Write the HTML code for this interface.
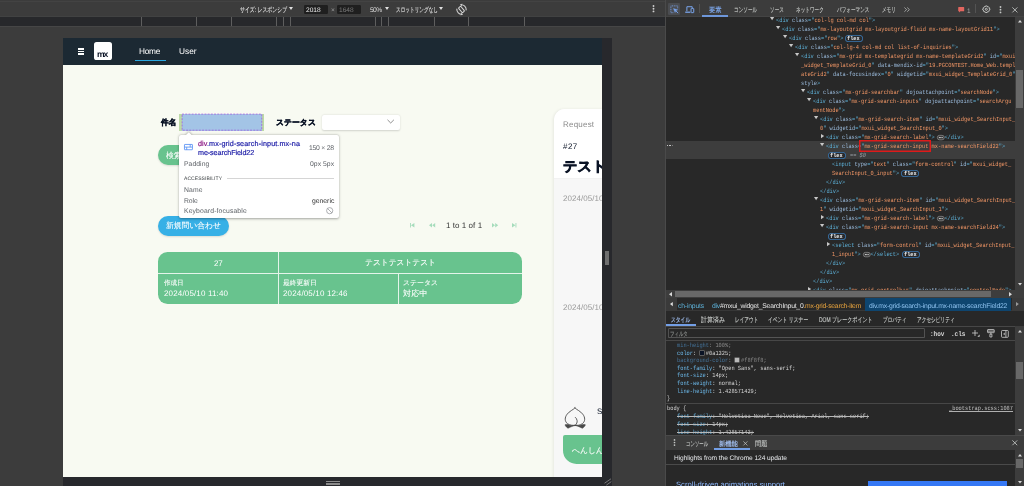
<!DOCTYPE html><html lang="ja"><head><meta charset="utf-8"><title>DevTools</title><style>
*{box-sizing:border-box;margin:0;padding:0}
html,body{width:1024px;height:486px;overflow:hidden;background:#3c3c3c;font-family:"Liberation Sans",sans-serif;text-rendering:geometricPrecision;}
svg{overflow:visible}
svg text{text-rendering:geometricPrecision;white-space:pre;}
.a{position:absolute;white-space:pre;}
#ltool,#page,#tip,#dt{will-change:transform;}
#ltool{left:0;top:0;width:665px;height:16.5px;background:#3c3c3c;}
#media{left:0;top:16.4px;width:665.4px;height:9.7px;background:#27282b;box-shadow:inset 0 0.7px 0 #4b4b4b;}
#media i{position:absolute;top:0.4px;height:9.3px;width:0.9px;background:#5e5e5e;}
#rres{left:601.5px;top:37.6px;width:10.5px;height:448.4px;background:#27282c;}
#bres{left:63.3px;top:476.5px;width:548.7px;height:9.5px;background:#27282c;}
#vsep{left:665px;top:0;width:1px;height:486px;background:#4a4a4a;}
#page{left:63px;top:38px;width:539px;height:439px;background:#f8faf2;overflow:hidden;}
#nav{left:0;top:0;width:539px;height:26.9px;background:#1c2933;}
.btn{border-radius:12px;}
#card{left:95.2px;top:213.8px;width:364.3px;height:51.8px;background:#68c38e;border-radius:9.5px;}
#rp{left:490.6px;top:71.3px;width:100px;height:400px;background:#f7f7f7;border-top-left-radius:11px;box-shadow:-1px 0 3px rgba(0,0,0,.07);}
#tip{left:179px;top:135px;width:160px;height:82.6px;background:#fff;border-radius:2px;box-shadow:0 0.5px 2.6px rgba(0,0,0,.34),0 0 1px rgba(0,0,0,.12);}
#dt{left:666px;top:0;width:358px;height:486px;background:#282828;overflow:hidden;}
#dtbar{left:0;top:0;width:358px;height:16.5px;background:#3c3c3c;box-shadow:inset 0 -0.6px 0 #4c4c4c;}
.pill{position:absolute;height:7.2px;box-shadow:inset 0 0 0 0.8px #3a78b2;border-radius:3.6px;background:#2a2b2d;}
.dots{position:absolute;height:4.4px;width:6.4px;border-radius:2px;background:#6b6b6b;}
.sb{background:#3d3d3d;}
.th{background:#686868;}
</style></head><body>
<div class="a" id="ltool">
<svg class="a" style="left:239.80px;top:0.00px" width="47.1" height="16"><text x="0" y="12" font-family="Liberation Sans, sans-serif" font-size="6.9" fill="#dcdcdc" stroke="#dcdcdc" stroke-width="0.14" textLength="47.10" lengthAdjust="spacingAndGlyphs">サイズ: レスポンシブ</text></svg>
<svg class="a" style="left:288.50px;top:7.20px" width="4" height="3" viewBox="0 0 4 3" ><path d="M0 0h4L2 3z" fill="#e0e0e0"/></svg>
<div class="a" style="left:304.00px;top:4.90px;width:23.7px;height:9px;background:#1f1f1f;border-radius:1.2px"></div>
<svg class="a" style="left:305.60px;top:0.00px" width="14.6" height="16"><text x="0" y="12" font-family="Liberation Sans, sans-serif" font-size="6.6" fill="#f0f0f0" textLength="14.60" lengthAdjust="spacing">2018</text></svg>
<svg class="a" style="left:330.60px;top:0.00px" width="3.8" height="16"><text x="0" y="12" font-family="Liberation Sans, sans-serif" font-size="6.6" fill="#9a9a9a" textLength="3.80" lengthAdjust="spacing">×</text></svg>
<div class="a" style="left:336.90px;top:4.90px;width:23.7px;height:9px;background:#1f1f1f;border-radius:1.2px"></div>
<svg class="a" style="left:338.50px;top:0.00px" width="14.6" height="16"><text x="0" y="12" font-family="Liberation Sans, sans-serif" font-size="6.6" fill="#7b7b7b" textLength="14.60" lengthAdjust="spacing">1648</text></svg>
<svg class="a" style="left:370.40px;top:0.00px" width="12.2" height="16"><text x="0" y="12" font-family="Liberation Sans, sans-serif" font-size="6.7" fill="#dcdcdc" textLength="12.20" lengthAdjust="spacing">50%</text></svg>
<svg class="a" style="left:384.70px;top:7.20px" width="4" height="3" viewBox="0 0 4 3" ><path d="M0 0h4L2 3z" fill="#e0e0e0"/></svg>
<svg class="a" style="left:395.50px;top:0.00px" width="42.0" height="16"><text x="0" y="12" font-family="Liberation Sans, sans-serif" font-size="6.9" fill="#dcdcdc" stroke="#dcdcdc" stroke-width="0.14" textLength="42.00" lengthAdjust="spacingAndGlyphs">スロットリングなし</text></svg>
<svg class="a" style="left:439.20px;top:7.20px" width="4" height="3" viewBox="0 0 4 3" ><path d="M0 0h4L2 3z" fill="#e0e0e0"/></svg>
<svg class="a" style="left:455.60px;top:3.50px" width="11" height="11" viewBox="0 0 24 24" fill="none" stroke="#d6d6d6" stroke-width="2.3" stroke-linecap="round" stroke-linejoin="round"><rect x="8.8" y="5.2" width="6.4" height="13.6" rx="1.6" transform="rotate(-40 12 12)"/><path d="M10.5 1.6A10.6 10.6 0 0 1 22.2 13"/><path d="M13.5 22.4A10.6 10.6 0 0 1 1.8 11"/><path d="M13.2 0.2L10 1.7L12.6 4.2" fill="#d6d6d6" stroke-width="1"/><path d="M10.8 23.8L14 22.3L11.4 19.8" fill="#d6d6d6" stroke-width="1"/></svg>
<svg class="a" style="left:652.40px;top:5.20px" width="3" height="7.4" viewBox="0 0 3 7.4" fill="#d0d0d0"><circle cx="1.5" cy="1" r="0.95"/><circle cx="1.5" cy="3.7" r="0.95"/><circle cx="1.5" cy="6.4" r="0.95"/></svg>
<div class="a" style="left:0.00px;top:1.30px;width:665px;height:0.9px;background:#434343"></div>
</div>
<div class="a" id="media">
<i style="left:140.85px"></i>
<i style="left:196.05px"></i>
<i style="left:230.55px"></i>
<i style="left:275.85px"></i>
<i style="left:282.55px"></i>
<i style="left:289.85px"></i>
<i style="left:374.75px"></i>
<i style="left:381.45px"></i>
<i style="left:388.15px"></i>
<i style="left:434.15px"></i>
<i style="left:468.35px"></i>
<i style="left:523.55px"></i>
</div>
<div class="a" style="left:0.00px;top:26.10px;width:665px;height:1px;background:#464646"></div>
<div class="a" id="rres"></div><div class="a" id="bres"></div>
<div class="a" style="left:604.90px;top:250.90px;width:1.7px;height:14.1px;background:#6f6f6f"></div>
<div class="a" style="left:607.30px;top:250.90px;width:1.7px;height:14.1px;background:#6f6f6f"></div>
<div class="a" style="left:325.80px;top:480.80px;width:14.2px;height:1.6px;background:#8a8a8a"></div>
<div class="a" style="left:325.80px;top:483.00px;width:14.2px;height:1.7px;background:#8a8a8a"></div>
<svg class="a" style="left:603.50px;top:478.30px" width="7.5" height="7.5" viewBox="0 0 7.5 7.5" stroke="#8a8a8a" stroke-width="0.8"><path d="M0.5 5.2L7 0.8M2.3 7.2L7.3 3.6"/></svg>
<div class="a" id="page">
<div class="a" id="nav"></div>
<div class="a" style="left:14.70px;top:10.20px;width:6.1px;height:1.45px;background:#fff"></div>
<div class="a" style="left:14.70px;top:12.70px;width:6.1px;height:1.45px;background:#fff"></div>
<div class="a" style="left:14.70px;top:15.20px;width:6.1px;height:1.45px;background:#fff"></div>
<div class="a" style="left:31.00px;top:4.30px;width:17.9px;height:17.8px;background:#fff;border-radius:2.6px"></div>
<svg class="a" style="left:33.60px;top:7.00px" width="11.4" height="16"><text x="0" y="12" font-family="Liberation Sans, sans-serif" font-size="8.6" fill="#0a1325" font-weight="bold" textLength="11.40" lengthAdjust="spacing">mx</text></svg>
<svg class="a" style="left:76.30px;top:4.00px" width="21.4" height="16"><text x="0" y="12" font-family="Liberation Sans, sans-serif" font-size="8.3" fill="#fff" textLength="21.40" lengthAdjust="spacing">Home</text></svg>
<div class="a" style="left:71.80px;top:21.70px;width:30.9px;height:1.2px;background:#2aa7e0"></div>
<svg class="a" style="left:116.00px;top:4.00px" width="17.5" height="16"><text x="0" y="12" font-family="Liberation Sans, sans-serif" font-size="8.3" fill="#fff" textLength="17.50" lengthAdjust="spacing">User</text></svg>
<svg class="a" style="left:97.70px;top:75.00px" width="15.3" height="16"><text x="0" y="12" font-family="Liberation Sans, sans-serif" font-size="7.9" fill="#0a1325" font-weight="bold" stroke="#0a1325" stroke-width="0.40" textLength="15.30" lengthAdjust="spacingAndGlyphs">件名</text></svg>
<svg class="a" style="left:213.10px;top:75.00px" width="39.9" height="16"><text x="0" y="12" font-family="Liberation Sans, sans-serif" font-size="7.9" fill="#0a1325" font-weight="bold" stroke="#0a1325" stroke-width="0.40" textLength="39.90" lengthAdjust="spacingAndGlyphs">ステータス</text></svg>
<div class="a" style="left:258.50px;top:76.60px;width:78.7px;height:15.5px;background:#fff;border-radius:2px;box-shadow:0 0.6px 2px rgba(0,0,0,.16)"></div>
<svg class="a" style="left:323.60px;top:81.40px" width="7.4" height="5" viewBox="0 0 7.4 5" fill="none" stroke="#6a6a6a" stroke-width="0.75"><path d="M0.5 0.8L3.7 4L6.9 0.8"/></svg>
<div class="a btn" style="left:94.90px;top:107.40px;width:33px;height:20px;background:#68c38e;box-shadow:0 1px 2px rgba(0,0,0,.12)"></div>
<svg class="a" style="left:103.30px;top:108.00px" width="15.8" height="16"><text x="0" y="12" font-family="Liberation Sans, sans-serif" font-size="7.9" fill="#fff" stroke="#fff" stroke-width="0.09" textLength="15.80" lengthAdjust="spacingAndGlyphs">検索</text></svg>
<div class="a btn" style="left:94.90px;top:177.80px;width:71.3px;height:20.3px;background:#37b0e6;box-shadow:0 1px 2px rgba(0,0,0,.12)"></div>
<svg class="a" style="left:103.30px;top:178.00px" width="55.0" height="16"><text x="0" y="12" font-family="Liberation Sans, sans-serif" font-size="7.9" fill="#fff" stroke="#fff" stroke-width="0.09" textLength="55.00" lengthAdjust="spacingAndGlyphs">新規問い合わせ</text></svg>
<svg class="a" style="left:347.30px;top:185.20px" width="6.4" height="4.6" viewBox="0 0 6.4 4.6" ><path d="M0 0h0.9v4.6H0z M4.4 0v4.6L1 2.3z" fill="#a6dcbc"/></svg>
<svg class="a" style="left:365.70px;top:185.20px" width="6.4" height="4.6" viewBox="0 0 6.4 4.6" ><path d="M3 0v4.6L0 2.3z M6.2 0v4.6L3.2 2.3z" fill="#a6dcbc"/></svg>
<svg class="a" style="left:428.90px;top:185.20px" width="6.4" height="4.6" viewBox="0 0 6.4 4.6" ><path d="M0 0v4.6L3 2.3z M3.2 0v4.6L6.2 2.3z" fill="#a6dcbc"/></svg>
<svg class="a" style="left:449.20px;top:185.20px" width="6.4" height="4.6" viewBox="0 0 6.4 4.6" ><path d="M3.5 0h0.9v4.6H3.5z M0 0v4.6L3.4 2.3z" fill="#a6dcbc"/></svg>
<svg class="a" style="left:382.60px;top:178.00px" width="36.1" height="16"><text x="0" y="12" font-family="Liberation Sans, sans-serif" font-size="8.0" fill="#333" textLength="36.10" lengthAdjust="spacing">1 to 1 of 1</text></svg>
<div class="a" id="card">
<div class="a" style="left:0.00px;top:21.20px;width:364.3px;height:0.7px;background:#e4f4ea"></div>
<div class="a" style="left:119.80px;top:0.00px;width:0.7px;height:51.8px;background:#e4f4ea"></div>
<div class="a" style="left:239.80px;top:21.20px;width:0.7px;height:30.6px;background:#e4f4ea"></div>
<svg class="a" style="left:56.20px;top:2.20px" width="8.8" height="16"><text x="0" y="12" font-family="Liberation Sans, sans-serif" font-size="8.0" fill="#fff" textLength="8.80" lengthAdjust="spacing">27</text></svg>
<svg class="a" style="left:206.80px;top:1.20px" width="71.0" height="16"><text x="0" y="12" font-family="Liberation Sans, sans-serif" font-size="7.9" fill="#fff" stroke="#fff" stroke-width="0.09" textLength="71.00" lengthAdjust="spacingAndGlyphs">テストテストテスト</text></svg>
<svg class="a" style="left:5.50px;top:21.20px" width="19.5" height="16"><text x="0" y="12" font-family="Liberation Sans, sans-serif" font-size="6.8" fill="#fff" stroke="#fff" stroke-width="0.08" textLength="19.50" lengthAdjust="spacingAndGlyphs">作成日</text></svg>
<svg class="a" style="left:5.50px;top:32.20px" width="64.0" height="16"><text x="0" y="12" font-family="Liberation Sans, sans-serif" font-size="8.0" fill="#fff" textLength="64.00" lengthAdjust="spacing">2024/05/10 11:40</text></svg>
<svg class="a" style="left:125.00px;top:21.20px" width="33.8" height="16"><text x="0" y="12" font-family="Liberation Sans, sans-serif" font-size="6.8" fill="#fff" stroke="#fff" stroke-width="0.08" textLength="33.80" lengthAdjust="spacingAndGlyphs">最終更新日</text></svg>
<svg class="a" style="left:125.00px;top:32.20px" width="64.5" height="16"><text x="0" y="12" font-family="Liberation Sans, sans-serif" font-size="8.0" fill="#fff" textLength="64.50" lengthAdjust="spacing">2024/05/10 12:46</text></svg>
<svg class="a" style="left:244.80px;top:21.20px" width="35.0" height="16"><text x="0" y="12" font-family="Liberation Sans, sans-serif" font-size="6.8" fill="#fff" stroke="#fff" stroke-width="0.08" textLength="35.00" lengthAdjust="spacingAndGlyphs">ステータス</text></svg>
<svg class="a" style="left:244.80px;top:32.20px" width="24.5" height="16"><text x="0" y="12" font-family="Liberation Sans, sans-serif" font-size="7.9" fill="#fff" stroke="#fff" stroke-width="0.09" textLength="24.50" lengthAdjust="spacingAndGlyphs">対応中</text></svg>
</div>
<div class="a" id="rp">
<div class="a" style="left:0.00px;top:0.00px;width:100px;height:69.7px;background:#fff;border-top-left-radius:11px;box-shadow:inset 0 -0.6px 0 #e6e6e6"></div>
<svg class="a" style="left:9.00px;top:5.70px" width="31.1" height="16"><text x="0" y="12" font-family="Liberation Sans, sans-serif" font-size="8.0" fill="#8a8a8a" textLength="31.10" lengthAdjust="spacing">Request</text></svg>
<svg class="a" style="left:9.00px;top:27.70px" width="14.3" height="16"><text x="0" y="12" font-family="Liberation Sans, sans-serif" font-size="8.0" fill="#0a1325" textLength="14.30" lengthAdjust="spacing">#27</text></svg>
<svg class="a" style="left:9.00px;top:49.70px" width="43.6" height="16"><text x="0" y="12" font-family="Liberation Sans, sans-serif" font-size="14.0" fill="#0a1325" font-weight="bold" stroke="#0a1325" stroke-width="0.70" textLength="43.60" lengthAdjust="spacingAndGlyphs">テスト</text></svg>
<svg class="a" style="left:9.00px;top:79.70px" width="40.4" height="16"><text x="0" y="12" font-family="Liberation Sans, sans-serif" font-size="8.0" fill="#999" textLength="40.40" lengthAdjust="spacing">2024/05/10</text></svg>
<svg class="a" style="left:9.00px;top:188.70px" width="40.4" height="16"><text x="0" y="12" font-family="Liberation Sans, sans-serif" font-size="8.0" fill="#999" textLength="40.40" lengthAdjust="spacing">2024/05/10</text></svg>
<svg class="a" style="left:4.30px;top:292.70px" width="36" height="32" viewBox="0 0 36 32" fill="none" stroke="#404040" stroke-width="0.85" stroke-linejoin="round" stroke-linecap="round"><path d="M16.95 5.9C15.55 7.7 11.35 9.1 9.15 12.2C6.55 15.4 6.55 19.4 9.45 21.6C11.65 23.4 14.95 23.6 17.15 23.1C19.35 23.6 22.25 23.4 24.45 21.6C27.35 19.4 27.35 15.4 24.75 12.2C22.55 9.1 18.35 7.7 16.95 5.9Z"/><path d="M17.4 23.2C18.6 21.8 19.4 20.4 19.1 18.6C18.9 17.2 18.2 16 17.4 15.4"/><path d="M17.2 23.5C14.4 24 12.4 25.2 10 26.3C8.6 25.4 7.4 24.1 7 22.8C8 22.3 9 22.3 9.9 22.6C11.2 23.3 14 23.8 17.2 23.5Z" fill="#4a4a4a" stroke-width="0.5"/><path d="M17.2 23.5C20 24 22 25.2 24.4 26.3C25.8 25.4 27 24.1 27.4 22.8C26.4 22.3 25.4 22.3 24.5 22.6C23.2 23.3 20.4 23.8 17.2 23.5Z" fill="#4a4a4a" stroke-width="0.5"/></svg>
<svg class="a" style="left:43.30px;top:292.70px" width="4.6" height="16"><text x="0" y="12" font-family="Liberation Sans, sans-serif" font-size="8.0" fill="#0a1325" textLength="4.60" lengthAdjust="spacing">S</text></svg>
<div class="a" style="left:9.20px;top:325.70px;width:60px;height:29.1px;background:#68c38e;border-radius:2px 0 0 13.5px"></div>
<svg class="a" style="left:18.60px;top:331.70px" width="31.8" height="16"><text x="0" y="12" font-family="Liberation Sans, sans-serif" font-size="7.9" fill="#fff" stroke="#fff" stroke-width="0.09" textLength="31.80" lengthAdjust="spacingAndGlyphs">へんしん</text></svg>
</div>
<div class="a" style="left:115.90px;top:76.40px;width:85px;height:16.3px;background:#bcd9a6"></div>
<div class="a" style="left:119.00px;top:76.40px;width:79.9px;height:16.3px;background:#a3c4e6"></div>
<svg class="a" style="left:119.00px;top:76.40px" width="79.9" height="16.3" viewBox="0 0 79.9 16.3" ><rect x="0.1" y="0.1" width="79.7" height="16.1" fill="none" stroke="#a152dc" stroke-width="0.72" stroke-dasharray="1.9 1.3"/></svg>
</div>
<div class="a" id="tip">
<svg class="a" style="left:6px;top:-3.2px;filter:drop-shadow(0 -0.3px 0.8px rgba(0,0,0,.28))" width="7.6" height="4" viewBox="0 0 7.6 4"><path d="M0 4L3.8 0.3L7.6 4z" fill="#fff"/></svg>
<div class="a" style="left:4px;top:0;width:12px;height:1.6px;background:#fff"></div>
<svg class="a" style="left:5.00px;top:8.80px" width="8.9" height="6.2" viewBox="0 0 8.9 6.2" fill="none" stroke="#5a92f4" stroke-width="0.85"><rect x="0.45" y="0.45" width="8" height="5.3" rx="0.3"/><path d="M0.45 3.1h8M6.2 0.45v2.65M2.7 3.1v2.65"/></svg>
<svg class="a" style="left:18.70px;top:-1.00px" width="101.9" height="16"><text x="0" y="12" font-family="Liberation Sans, sans-serif" font-size="7.2" fill="#1a1aa6" stroke="#1a1aa6" stroke-width="0.18" textLength="101.90" lengthAdjust="spacing"><tspan fill="#881280" stroke="#881280">div</tspan>.mx-grid-search-input.mx-na</text></svg>
<svg class="a" style="left:18.70px;top:8.00px" width="56.2" height="16"><text x="0" y="12" font-family="Liberation Sans, sans-serif" font-size="7.2" fill="#1a1aa6" stroke="#1a1aa6" stroke-width="0.18" textLength="56.20" lengthAdjust="spacing">me-searchField22</text></svg>
<svg class="a" style="left:130.00px;top:3.00px" width="25.0" height="16"><text x="0" y="12" font-family="Liberation Sans, sans-serif" font-size="6.8" fill="#5f6368" textLength="25.00" lengthAdjust="spacing">150 × 28</text></svg>
<svg class="a" style="left:5.00px;top:19.00px" width="25.3" height="16"><text x="0" y="12" font-family="Liberation Sans, sans-serif" font-size="6.8" fill="#5f6368" textLength="25.30" lengthAdjust="spacing">Padding</text></svg>
<svg class="a" style="left:130.90px;top:19.00px" width="24.1" height="16"><text x="0" y="12" font-family="Liberation Sans, sans-serif" font-size="6.8" fill="#5f6368" textLength="24.10" lengthAdjust="spacing">0px 5px</text></svg>
<svg class="a" style="left:5.00px;top:33.00px" width="38.0" height="16"><text x="0" y="12" font-family="Liberation Sans, sans-serif" font-size="5.0" fill="#3c4043" textLength="38.00" lengthAdjust="spacing">ACCESSIBILITY</text></svg>
<div class="a" style="left:47.50px;top:42.90px;width:107.5px;height:0.5px;background:#d5d5d5"></div>
<svg class="a" style="left:5.00px;top:45.00px" width="18.5" height="16"><text x="0" y="12" font-family="Liberation Sans, sans-serif" font-size="6.8" fill="#5f6368" textLength="18.50" lengthAdjust="spacing">Name</text></svg>
<svg class="a" style="left:5.00px;top:56.00px" width="13.7" height="16"><text x="0" y="12" font-family="Liberation Sans, sans-serif" font-size="6.8" fill="#5f6368" textLength="13.70" lengthAdjust="spacing">Role</text></svg>
<svg class="a" style="left:132.90px;top:56.00px" width="22.3" height="16"><text x="0" y="12" font-family="Liberation Sans, sans-serif" font-size="6.8" fill="#303030" textLength="22.30" lengthAdjust="spacing">generic</text></svg>
<svg class="a" style="left:5.00px;top:66.00px" width="62.7" height="16"><text x="0" y="12" font-family="Liberation Sans, sans-serif" font-size="6.8" fill="#5f6368" textLength="62.70" lengthAdjust="spacing">Keyboard-focusable</text></svg>
<svg class="a" style="left:147.30px;top:71.50px" width="7.4" height="7.4" viewBox="0 0 7.4 7.4" fill="none" stroke="#8a8d91" stroke-width="0.7"><circle cx="3.7" cy="3.7" r="3.1"/><path d="M1.5 1.5L5.9 5.9"/></svg>
</div>
<div class="a" id="vsep"></div>
<div class="a" id="dt">
<div class="a" style="left:0;top:16.5px;width:349.4px;height:273.8px;overflow:hidden">
<div class="a" style="left:0.00px;top:124.50px;width:350px;height:17.9px;background:#3d3d3d"></div>
<div class="a" style="left:1.10px;top:128.40px;width:1.05px;height:0.95px;background:#c4c4c4"></div>
<div class="a" style="left:2.65px;top:128.40px;width:1.05px;height:0.95px;background:#c4c4c4"></div>
<div class="a" style="left:4.20px;top:128.40px;width:1.05px;height:0.95px;background:#c4c4c4"></div>
<div class="a" style="left:5.75px;top:128.40px;width:1.05px;height:0.95px;background:#7a7a7a"></div>
<svg class="a" style="left:104.20px;top:0.40px" width="4.2" height="3.2" viewBox="0 0 4 3" ><path d="M0 0h4L2 3z" fill="#c8c8c8"/></svg>
<svg class="a" style="left:110.10px;top:-6.50px" width="99.2" height="16"><text x="0" y="12" font-family="Liberation Mono, monospace" font-size="6.2" fill="#5db0d7" textLength="99.20" lengthAdjust="spacingAndGlyphs">&lt;div<tspan fill="#9bbbdc"> class</tspan>=&quot;<tspan fill="#f29766">col-lg col-md col</tspan>&quot;&gt;</text></svg>
<svg class="a" style="left:110.40px;top:9.40px" width="4.2" height="3.2" viewBox="0 0 4 3" ><path d="M0 0h4L2 3z" fill="#c8c8c8"/></svg>
<svg class="a" style="left:116.30px;top:2.50px" width="217.6" height="16"><text x="0" y="12" font-family="Liberation Mono, monospace" font-size="6.2" fill="#5db0d7" textLength="217.60" lengthAdjust="spacingAndGlyphs">&lt;div<tspan fill="#9bbbdc"> class</tspan>=&quot;<tspan fill="#f29766">mx-layoutgrid mx-layoutgrid-fluid mx-name-layoutGrid11</tspan>&quot;&gt;</text></svg>
<svg class="a" style="left:116.60px;top:18.40px" width="4.2" height="3.2" viewBox="0 0 4 3" ><path d="M0 0h4L2 3z" fill="#c8c8c8"/></svg>
<svg class="a" style="left:122.50px;top:11.50px" width="54.4" height="16"><text x="0" y="12" font-family="Liberation Mono, monospace" font-size="6.2" fill="#5db0d7" textLength="54.40" lengthAdjust="spacingAndGlyphs">&lt;div<tspan fill="#9bbbdc"> class</tspan>=&quot;<tspan fill="#f29766">row</tspan>&quot;&gt;</text></svg>
<svg class="a" style="left:122.80px;top:27.40px" width="4.2" height="3.2" viewBox="0 0 4 3" ><path d="M0 0h4L2 3z" fill="#c8c8c8"/></svg>
<svg class="a" style="left:128.70px;top:20.50px" width="163.2" height="16"><text x="0" y="12" font-family="Liberation Mono, monospace" font-size="6.2" fill="#5db0d7" textLength="163.20" lengthAdjust="spacingAndGlyphs">&lt;div<tspan fill="#9bbbdc"> class</tspan>=&quot;<tspan fill="#f29766">col-lg-4 col-md col list-of-inquiries</tspan>&quot;&gt;</text></svg>
<svg class="a" style="left:129.00px;top:36.40px" width="4.2" height="3.2" viewBox="0 0 4 3" ><path d="M0 0h4L2 3z" fill="#c8c8c8"/></svg>
<svg class="a" style="left:134.90px;top:29.50px" width="214.4" height="16"><text x="0" y="12" font-family="Liberation Mono, monospace" font-size="6.2" fill="#5db0d7" textLength="214.40" lengthAdjust="spacingAndGlyphs">&lt;div<tspan fill="#9bbbdc"> class</tspan>=&quot;<tspan fill="#f29766">mx-grid mx-templategrid mx-name-templateGrid2</tspan>&quot;<tspan fill="#9bbbdc"> id</tspan>=&quot;<tspan fill="#f29766">mxui</tspan></text></svg>
<svg class="a" style="left:134.90px;top:38.50px" width="214.4" height="16"><text x="0" y="12" font-family="Liberation Mono, monospace" font-size="6.2" fill="#5db0d7" textLength="214.40" lengthAdjust="spacingAndGlyphs"><tspan fill="#f29766">_widget_TemplateGrid_0</tspan>&quot;<tspan fill="#9bbbdc"> data-mendix-id</tspan>=&quot;<tspan fill="#f29766">19.PGCONTEST.Home_Web.templ</tspan></text></svg>
<svg class="a" style="left:134.90px;top:47.50px" width="214.4" height="16"><text x="0" y="12" font-family="Liberation Mono, monospace" font-size="6.2" fill="#5db0d7" textLength="214.40" lengthAdjust="spacingAndGlyphs"><tspan fill="#f29766">ateGrid2</tspan>&quot;<tspan fill="#9bbbdc"> data-focusindex</tspan>=&quot;<tspan fill="#f29766">0</tspan>&quot;<tspan fill="#9bbbdc"> widgetid</tspan>=&quot;<tspan fill="#f29766">mxui_widget_TemplateGrid_0</tspan>&quot;</text></svg>
<svg class="a" style="left:134.90px;top:56.50px" width="19.2" height="16"><text x="0" y="12" font-family="Liberation Mono, monospace" font-size="6.2" fill="#5db0d7" textLength="19.20" lengthAdjust="spacingAndGlyphs"><tspan fill="#9bbbdc">style</tspan>&gt;</text></svg>
<svg class="a" style="left:135.20px;top:72.40px" width="4.2" height="3.2" viewBox="0 0 4 3" ><path d="M0 0h4L2 3z" fill="#c8c8c8"/></svg>
<svg class="a" style="left:141.10px;top:65.50px" width="192.0" height="16"><text x="0" y="12" font-family="Liberation Mono, monospace" font-size="6.2" fill="#5db0d7" textLength="192.00" lengthAdjust="spacingAndGlyphs">&lt;div<tspan fill="#9bbbdc"> class</tspan>=&quot;<tspan fill="#f29766">mx-grid-searchbar</tspan>&quot;<tspan fill="#9bbbdc"> dojoattachpoint</tspan>=&quot;<tspan fill="#f29766">searchNode</tspan>&quot;&gt;</text></svg>
<svg class="a" style="left:141.40px;top:81.40px" width="4.2" height="3.2" viewBox="0 0 4 3" ><path d="M0 0h4L2 3z" fill="#c8c8c8"/></svg>
<svg class="a" style="left:147.30px;top:74.50px" width="198.4" height="16"><text x="0" y="12" font-family="Liberation Mono, monospace" font-size="6.2" fill="#5db0d7" textLength="198.40" lengthAdjust="spacingAndGlyphs">&lt;div<tspan fill="#9bbbdc"> class</tspan>=&quot;<tspan fill="#f29766">mx-grid-search-inputs</tspan>&quot;<tspan fill="#9bbbdc"> dojoattachpoint</tspan>=&quot;<tspan fill="#f29766">searchArgu</tspan></text></svg>
<svg class="a" style="left:147.30px;top:83.50px" width="32.0" height="16"><text x="0" y="12" font-family="Liberation Mono, monospace" font-size="6.2" fill="#5db0d7" textLength="32.00" lengthAdjust="spacingAndGlyphs"><tspan fill="#f29766">mentNode</tspan>&quot;&gt;</text></svg>
<svg class="a" style="left:147.60px;top:99.40px" width="4.2" height="3.2" viewBox="0 0 4 3" ><path d="M0 0h4L2 3z" fill="#c8c8c8"/></svg>
<svg class="a" style="left:153.50px;top:92.50px" width="195.2" height="16"><text x="0" y="12" font-family="Liberation Mono, monospace" font-size="6.2" fill="#5db0d7" textLength="195.20" lengthAdjust="spacingAndGlyphs">&lt;div<tspan fill="#9bbbdc"> class</tspan>=&quot;<tspan fill="#f29766">mx-grid-search-item</tspan>&quot;<tspan fill="#9bbbdc"> id</tspan>=&quot;<tspan fill="#f29766">mxui_widget_SearchInput_</tspan></text></svg>
<svg class="a" style="left:153.50px;top:101.50px" width="128.0" height="16"><text x="0" y="12" font-family="Liberation Mono, monospace" font-size="6.2" fill="#5db0d7" textLength="128.00" lengthAdjust="spacingAndGlyphs"><tspan fill="#f29766">0</tspan>&quot;<tspan fill="#9bbbdc"> widgetid</tspan>=&quot;<tspan fill="#f29766">mxui_widget_SearchInput_0</tspan>&quot;&gt;</text></svg>
<svg class="a" style="left:154.70px;top:117.10px" width="3.2" height="4.2" viewBox="0 0 3 4" ><path d="M0 0v4L3 2z" fill="#c8c8c8"/></svg>
<svg class="a" style="left:159.70px;top:110.50px" width="137.6" height="16"><text x="0" y="12" font-family="Liberation Mono, monospace" font-size="6.2" fill="#5db0d7" textLength="137.60" lengthAdjust="spacingAndGlyphs">&lt;div<tspan fill="#9bbbdc"> class</tspan>=&quot;<tspan fill="#f29766">mx-grid-search-label</tspan>&quot;&gt;   &lt;/div&gt;</text></svg>
<svg class="a" style="left:153.80px;top:126.40px" width="4.2" height="3.2" viewBox="0 0 4 3" ><path d="M0 0h4L2 3z" fill="#c8c8c8"/></svg>
<svg class="a" style="left:159.70px;top:119.50px" width="179.2" height="16"><text x="0" y="12" font-family="Liberation Mono, monospace" font-size="6.2" fill="#5db0d7" textLength="179.20" lengthAdjust="spacingAndGlyphs">&lt;div<tspan fill="#9bbbdc"> class</tspan>=&quot;<tspan fill="#f29766">mx-grid-search-input mx-name-searchField22</tspan>&quot;&gt;</text></svg>
<svg class="a" style="left:165.90px;top:137.50px" width="179.2" height="16"><text x="0" y="12" font-family="Liberation Mono, monospace" font-size="6.2" fill="#5db0d7" textLength="179.20" lengthAdjust="spacingAndGlyphs">&lt;input<tspan fill="#9bbbdc"> type</tspan>=&quot;<tspan fill="#f29766">text</tspan>&quot;<tspan fill="#9bbbdc"> class</tspan>=&quot;<tspan fill="#f29766">form-control</tspan>&quot;<tspan fill="#9bbbdc"> id</tspan>=&quot;<tspan fill="#f29766">mxui_widget_</tspan></text></svg>
<svg class="a" style="left:165.90px;top:146.50px" width="67.2" height="16"><text x="0" y="12" font-family="Liberation Mono, monospace" font-size="6.2" fill="#5db0d7" textLength="67.20" lengthAdjust="spacingAndGlyphs"><tspan fill="#f29766">SearchInput_0_input</tspan>&quot;&gt;</text></svg>
<svg class="a" style="left:159.70px;top:155.50px" width="19.2" height="16"><text x="0" y="12" font-family="Liberation Mono, monospace" font-size="6.2" fill="#5db0d7" textLength="19.20" lengthAdjust="spacingAndGlyphs">&lt;/div&gt;</text></svg>
<svg class="a" style="left:153.50px;top:164.50px" width="19.2" height="16"><text x="0" y="12" font-family="Liberation Mono, monospace" font-size="6.2" fill="#5db0d7" textLength="19.20" lengthAdjust="spacingAndGlyphs">&lt;/div&gt;</text></svg>
<svg class="a" style="left:147.60px;top:180.40px" width="4.2" height="3.2" viewBox="0 0 4 3" ><path d="M0 0h4L2 3z" fill="#c8c8c8"/></svg>
<svg class="a" style="left:153.50px;top:173.50px" width="195.2" height="16"><text x="0" y="12" font-family="Liberation Mono, monospace" font-size="6.2" fill="#5db0d7" textLength="195.20" lengthAdjust="spacingAndGlyphs">&lt;div<tspan fill="#9bbbdc"> class</tspan>=&quot;<tspan fill="#f29766">mx-grid-search-item</tspan>&quot;<tspan fill="#9bbbdc"> id</tspan>=&quot;<tspan fill="#f29766">mxui_widget_SearchInput_</tspan></text></svg>
<svg class="a" style="left:153.50px;top:182.50px" width="128.0" height="16"><text x="0" y="12" font-family="Liberation Mono, monospace" font-size="6.2" fill="#5db0d7" textLength="128.00" lengthAdjust="spacingAndGlyphs"><tspan fill="#f29766">1</tspan>&quot;<tspan fill="#9bbbdc"> widgetid</tspan>=&quot;<tspan fill="#f29766">mxui_widget_SearchInput_1</tspan>&quot;&gt;</text></svg>
<svg class="a" style="left:154.70px;top:198.10px" width="3.2" height="4.2" viewBox="0 0 3 4" ><path d="M0 0v4L3 2z" fill="#c8c8c8"/></svg>
<svg class="a" style="left:159.70px;top:191.50px" width="137.6" height="16"><text x="0" y="12" font-family="Liberation Mono, monospace" font-size="6.2" fill="#5db0d7" textLength="137.60" lengthAdjust="spacingAndGlyphs">&lt;div<tspan fill="#9bbbdc"> class</tspan>=&quot;<tspan fill="#f29766">mx-grid-search-label</tspan>&quot;&gt;   &lt;/div&gt;</text></svg>
<svg class="a" style="left:153.80px;top:207.40px" width="4.2" height="3.2" viewBox="0 0 4 3" ><path d="M0 0h4L2 3z" fill="#c8c8c8"/></svg>
<svg class="a" style="left:159.70px;top:200.50px" width="179.2" height="16"><text x="0" y="12" font-family="Liberation Mono, monospace" font-size="6.2" fill="#5db0d7" textLength="179.20" lengthAdjust="spacingAndGlyphs">&lt;div<tspan fill="#9bbbdc"> class</tspan>=&quot;<tspan fill="#f29766">mx-grid-search-input mx-name-searchField24</tspan>&quot;&gt;</text></svg>
<svg class="a" style="left:160.90px;top:225.10px" width="3.2" height="4.2" viewBox="0 0 3 4" ><path d="M0 0v4L3 2z" fill="#c8c8c8"/></svg>
<svg class="a" style="left:165.90px;top:218.50px" width="182.4" height="16"><text x="0" y="12" font-family="Liberation Mono, monospace" font-size="6.2" fill="#5db0d7" textLength="182.40" lengthAdjust="spacingAndGlyphs">&lt;select<tspan fill="#9bbbdc"> class</tspan>=&quot;<tspan fill="#f29766">form-control</tspan>&quot;<tspan fill="#9bbbdc"> id</tspan>=&quot;<tspan fill="#f29766">mxui_widget_SearchInput_</tspan></text></svg>
<svg class="a" style="left:165.90px;top:227.50px" width="67.2" height="16"><text x="0" y="12" font-family="Liberation Mono, monospace" font-size="6.2" fill="#5db0d7" textLength="67.20" lengthAdjust="spacingAndGlyphs"><tspan fill="#f29766">1_input</tspan>&quot;&gt;   &lt;/select&gt;</text></svg>
<svg class="a" style="left:159.70px;top:236.50px" width="19.2" height="16"><text x="0" y="12" font-family="Liberation Mono, monospace" font-size="6.2" fill="#5db0d7" textLength="19.20" lengthAdjust="spacingAndGlyphs">&lt;/div&gt;</text></svg>
<svg class="a" style="left:153.50px;top:245.50px" width="19.2" height="16"><text x="0" y="12" font-family="Liberation Mono, monospace" font-size="6.2" fill="#5db0d7" textLength="19.20" lengthAdjust="spacingAndGlyphs">&lt;/div&gt;</text></svg>
<svg class="a" style="left:147.30px;top:254.50px" width="19.2" height="16"><text x="0" y="12" font-family="Liberation Mono, monospace" font-size="6.2" fill="#5db0d7" textLength="19.20" lengthAdjust="spacingAndGlyphs">&lt;/div&gt;</text></svg>
<svg class="a" style="left:142.30px;top:270.10px" width="3.2" height="4.2" viewBox="0 0 3 4" ><path d="M0 0v4L3 2z" fill="#c8c8c8"/></svg>
<svg class="a" style="left:147.30px;top:263.50px" width="198.4" height="16"><text x="0" y="12" font-family="Liberation Mono, monospace" font-size="6.2" fill="#5db0d7" textLength="198.40" lengthAdjust="spacingAndGlyphs">&lt;div<tspan fill="#9bbbdc"> class</tspan>=&quot;<tspan fill="#f29766">mx-grid-controlbar</tspan>&quot;<tspan fill="#9bbbdc"> dojoattachpoint</tspan>=&quot;<tspan fill="#f29766">controlNode</tspan>&quot;&gt;</text></svg>
<div class="a pill" style="left:178.50px;top:18.40px;width:18.2px"></div>
<svg class="a" style="left:181.30px;top:11.50px" width="12.6" height="16"><text x="0" y="12" font-family="Liberation Mono, monospace" font-size="5.6" fill="#5db0d7" font-weight="bold" textLength="12.60" lengthAdjust="spacingAndGlyphs"><tspan fill="#eef0f2">flex</tspan></text></svg>
<svg class="a" style="left:270.80px;top:118.30px" width="7.6" height="5.2" viewBox="0 0 7.6 5.2" ><rect x="0.35" y="0.35" width="6.9" height="4.5" rx="2.2" fill="#3a3a3a" stroke="#939393" stroke-width="0.7"/><path d="M1.9 2.6h3.8" stroke="#f0f0f0" stroke-width="0.95" stroke-dasharray="1 0.4"/></svg>
<div class="a pill" style="left:161.60px;top:135.40px;width:18.2px"></div>
<svg class="a" style="left:164.40px;top:128.50px" width="12.6" height="16"><text x="0" y="12" font-family="Liberation Mono, monospace" font-size="5.6" fill="#5db0d7" font-weight="bold" textLength="12.60" lengthAdjust="spacingAndGlyphs"><tspan fill="#eef0f2">flex</tspan></text></svg>
<svg class="a" style="left:183.80px;top:128.50px" width="16.0" height="16"><text x="0" y="12" font-family="Liberation Mono, monospace" font-size="6.2" fill="#5db0d7" font-style="italic" textLength="16.00" lengthAdjust="spacingAndGlyphs"><tspan fill="#9aa0a6">== $0</tspan></text></svg>
<div class="a pill" style="left:235.20px;top:153.40px;width:18.2px"></div>
<svg class="a" style="left:238.00px;top:146.50px" width="12.6" height="16"><text x="0" y="12" font-family="Liberation Mono, monospace" font-size="5.6" fill="#5db0d7" font-weight="bold" textLength="12.60" lengthAdjust="spacingAndGlyphs"><tspan fill="#eef0f2">flex</tspan></text></svg>
<svg class="a" style="left:270.80px;top:199.30px" width="7.6" height="5.2" viewBox="0 0 7.6 5.2" ><rect x="0.35" y="0.35" width="6.9" height="4.5" rx="2.2" fill="#3a3a3a" stroke="#939393" stroke-width="0.7"/><path d="M1.9 2.6h3.8" stroke="#f0f0f0" stroke-width="0.95" stroke-dasharray="1 0.4"/></svg>
<div class="a pill" style="left:161.60px;top:216.40px;width:18.2px"></div>
<svg class="a" style="left:164.40px;top:209.50px" width="12.6" height="16"><text x="0" y="12" font-family="Liberation Mono, monospace" font-size="5.6" fill="#5db0d7" font-weight="bold" textLength="12.60" lengthAdjust="spacingAndGlyphs"><tspan fill="#eef0f2">flex</tspan></text></svg>
<svg class="a" style="left:197.00px;top:235.30px" width="7.6" height="5.2" viewBox="0 0 7.6 5.2" ><rect x="0.35" y="0.35" width="6.9" height="4.5" rx="2.2" fill="#3a3a3a" stroke="#939393" stroke-width="0.7"/><path d="M1.9 2.6h3.8" stroke="#f0f0f0" stroke-width="0.95" stroke-dasharray="1 0.4"/></svg>
<div class="a pill" style="left:235.50px;top:234.40px;width:18.2px"></div>
<svg class="a" style="left:238.30px;top:227.50px" width="12.6" height="16"><text x="0" y="12" font-family="Liberation Mono, monospace" font-size="5.6" fill="#5db0d7" font-weight="bold" textLength="12.60" lengthAdjust="spacingAndGlyphs"><tspan fill="#eef0f2">flex</tspan></text></svg>
<div class="a" style="left:192.60px;top:123.90px;width:72.3px;height:11.6px;box-shadow:inset 0 0 0 1.5px #df1a1a"></div>
</div>
<div class="a sb" style="left:349.30px;top:16.50px;width:8.7px;height:273.8px"></div>
<div class="a th" style="left:350.20px;top:69.80px;width:6.6px;height:38.6px"></div>
<svg class="a" style="left:351.50px;top:19.80px" width="4" height="2.6" viewBox="0 0 4.6 3" ><path d="M0 3L2.3 0L4.6 3z" fill="#dadada"/></svg>
<svg class="a" style="left:351.50px;top:283.00px" width="4" height="2.6" viewBox="0 0 4.6 3" ><path d="M0 0L2.3 3L4.6 0z" fill="#dadada"/></svg>
<div class="a sb" style="left:0.00px;top:290.30px;width:358px;height:7.4px"></div>
<div class="a th" style="left:9.00px;top:291.10px;width:315.6px;height:5.8px"></div>
<svg class="a" style="left:2.60px;top:291.80px" width="3" height="4.4" viewBox="0 0 3 4.4" ><path d="M3 0L0 2.2L3 4.4z" fill="#dadada"/></svg>
<svg class="a" style="left:342.60px;top:291.80px" width="3" height="4.4" viewBox="0 0 3 4.4" ><path d="M0 0L3 2.2L0 4.4z" fill="#dadada"/></svg>
<div class="a" id="dtbar">
<div class="a" style="left:2.10px;top:3.10px;width:11.9px;height:11.6px;background:#4b4d51;border-radius:1.2px"></div>
<svg class="a" style="left:3.90px;top:4.50px" width="8.8" height="8.8" viewBox="0 0 16 16" fill="none" stroke="#78a3ec" stroke-width="1.5"><path d="M14 6V1.6H1.6V14H6" stroke-dasharray="1.9 1.3"/><path d="M6.2 6.2l8 2.6-3.4 1.6-1.6 3.4z" fill="#78a3ec" stroke-width="0.6"/><path d="M10.6 10.6l4.2 4.2" stroke-width="1.7"/></svg>
<svg class="a" style="left:18.70px;top:5.50px" width="9.4" height="7.2" viewBox="0 0 18 13.8" fill="none" stroke="#7aa6ee" stroke-width="1.9"><path d="M3.6 10V1.4h10.2v2.4"/><path d="M0.4 11.9h9.8" stroke-width="2.4"/><rect x="11.6" y="4.6" width="5.2" height="8.2" rx="0.9"/></svg>
<div class="a" style="left:32.60px;top:4.20px;width:0.7px;height:8.6px;background:#535353"></div>
<svg class="a" style="left:42.60px;top:0.00px" width="12.6" height="16"><text x="0" y="12" font-family="Liberation Sans, sans-serif" font-size="6.9" fill="#7ea8ec" stroke="#7ea8ec" stroke-width="0.14" textLength="12.60" lengthAdjust="spacingAndGlyphs">要素</text></svg>
<div class="a" style="left:36.30px;top:14.80px;width:25.6px;height:1.8px;background:#6e97da"></div>
<svg class="a" style="left:68.20px;top:0.00px" width="23.2" height="16"><text x="0" y="12" font-family="Liberation Sans, sans-serif" font-size="6.9" fill="#c4c7c5" stroke="#c4c7c5" stroke-width="0.14" textLength="23.20" lengthAdjust="spacingAndGlyphs">コンソール</text></svg>
<svg class="a" style="left:103.50px;top:0.00px" width="13.9" height="16"><text x="0" y="12" font-family="Liberation Sans, sans-serif" font-size="6.9" fill="#c4c7c5" stroke="#c4c7c5" stroke-width="0.14" textLength="13.90" lengthAdjust="spacingAndGlyphs">ソース</text></svg>
<svg class="a" style="left:130.00px;top:0.00px" width="27.8" height="16"><text x="0" y="12" font-family="Liberation Sans, sans-serif" font-size="6.9" fill="#c4c7c5" stroke="#c4c7c5" stroke-width="0.14" textLength="27.80" lengthAdjust="spacingAndGlyphs">ネットワーク</text></svg>
<svg class="a" style="left:170.50px;top:0.00px" width="32.5" height="16"><text x="0" y="12" font-family="Liberation Sans, sans-serif" font-size="6.9" fill="#c4c7c5" stroke="#c4c7c5" stroke-width="0.14" textLength="32.50" lengthAdjust="spacingAndGlyphs">パフォーマンス</text></svg>
<svg class="a" style="left:215.50px;top:0.00px" width="13.8" height="16"><text x="0" y="12" font-family="Liberation Sans, sans-serif" font-size="6.9" fill="#c4c7c5" stroke="#c4c7c5" stroke-width="0.14" textLength="13.80" lengthAdjust="spacingAndGlyphs">メモリ</text></svg>
<svg class="a" style="left:238.20px;top:6.80px" width="6" height="5.2" viewBox="0 0 6 5" fill="none" stroke="#c4c7c5" stroke-width="0.7"><path d="M0.4 0.4L2.6 2.5L0.4 4.6M3.2 0.4L5.4 2.5L3.2 4.6"/></svg>
<svg class="a" style="left:292.00px;top:6.90px" width="6.4" height="5.6" viewBox="0 0 6.4 6" ><path d="M0.6 0h5.2a0.6 0.6 0 0 1 0.6 0.6v3.4a0.6 0.6 0 0 1-0.6 0.6H2.4L0.9 6V4.6H0.6a0.6 0.6 0 0 1-0.6-0.6V0.6a0.6 0.6 0 0 1 0.6-0.6z" fill="#e2665f"/></svg>
<svg class="a" style="left:300.70px;top:1.00px" width="3.0" height="16"><text x="0" y="12" font-family="Liberation Sans, sans-serif" font-size="6.4" fill="#a4a4a4" textLength="3.00" lengthAdjust="spacing">1</text></svg>
<div class="a" style="left:309.40px;top:4.20px;width:0.7px;height:8.6px;background:#535353"></div>
<svg class="a" style="left:315.50px;top:4.90px" width="8.6" height="8.6" viewBox="0 0 24 24" fill="none" stroke="#c9cbc9" stroke-width="2.6" stroke-linejoin="round"><circle cx="12" cy="12" r="2.9"/><path d="M12 2.4l2.6 0.6 0.9 2.5 2.6-0.5 1.9 1.9-0.5 2.6 2.5 0.9v3.2l-2.5 0.9 0.5 2.6-1.9 1.9-2.6-0.5-0.9 2.5H9.4l-0.9-2.5-2.6 0.5-1.9-1.9 0.5-2.6-2.5-0.9v-3.2l2.5-0.9-0.5-2.6 1.9-1.9 2.6 0.5 0.9-2.5z"/></svg>
<svg class="a" style="left:333.10px;top:5.80px" width="3" height="7.4" viewBox="0 0 3 7.4" fill="#c4c7c5"><circle cx="1.5" cy="1" r="0.9"/><circle cx="1.5" cy="3.7" r="0.9"/><circle cx="1.5" cy="6.4" r="0.9"/></svg>
<svg class="a" style="left:345.70px;top:6.50px" width="5.8" height="5.8" viewBox="0 0 5.8 5.8" stroke="#c4c7c5" stroke-width="0.85"><path d="M0.4 0.4L5.4 5.4M5.4 0.4L0.4 5.4"/></svg>
</div>
<div class="a" style="left:0.00px;top:297.70px;width:358px;height:13.3px;background:#282828;box-shadow:inset 0 -0.6px 0 #474747"></div>
<div class="a" style="left:0.00px;top:297.70px;width:11.4px;height:13.2px;background:#3a3a3a"></div>
<svg class="a" style="left:4.40px;top:302.20px" width="2.8" height="4.2" viewBox="0 0 2.8 4.2" ><path d="M2.8 0L0 2.1L2.8 4.2z" fill="#e0e0e0"/></svg>
<div class="a" style="left:345.60px;top:297.70px;width:12.4px;height:13.2px;background:#3a3a3a"></div>
<svg class="a" style="left:350.00px;top:302.20px" width="2.8" height="4.2" viewBox="0 0 2.8 4.2" ><path d="M0 0L2.8 2.1L0 4.2z" fill="#9a9a9a"/></svg>
<div class="a" style="left:199.10px;top:297.70px;width:146.2px;height:13.2px;background:#0e456f"></div>
<svg class="a" style="left:11.80px;top:296.00px" width="26.2" height="16"><text x="0" y="12" font-family="Liberation Sans, sans-serif" font-size="6.8" fill="#5db0d7" textLength="26.20" lengthAdjust="spacing">ch-inputs</text></svg>
<svg class="a" style="left:46.30px;top:296.00px" width="149.3" height="16"><text x="0" y="12" font-family="Liberation Sans, sans-serif" font-size="6.8" fill="#e6e6e6" textLength="149.30" lengthAdjust="spacing"><tspan fill="#5db0d7">div</tspan>#mxui_widget_SearchInput_0<tspan fill="#e8a33d">.mx-grid-search-item</tspan></text></svg>
<svg class="a" style="left:203.00px;top:296.00px" width="138.3" height="16"><text x="0" y="12" font-family="Liberation Sans, sans-serif" font-size="6.8" fill="#8fc3f0" textLength="138.30" lengthAdjust="spacing">div.mx-grid-search-input.mx-name-searchField22</text></svg>
<svg class="a" style="left:4.70px;top:310.00px" width="19.2" height="16"><text x="0" y="12" font-family="Liberation Sans, sans-serif" font-size="6.8" fill="#a8c7fa" stroke="#a8c7fa" stroke-width="0.14" textLength="19.20" lengthAdjust="spacingAndGlyphs">スタイル</text></svg>
<div class="a" style="left:0.40px;top:324.30px;width:29.2px;height:1.4px;background:#739fe6"></div>
<svg class="a" style="left:34.90px;top:310.00px" width="24.1" height="16"><text x="0" y="12" font-family="Liberation Sans, sans-serif" font-size="6.8" fill="#c4c7c5" stroke="#c4c7c5" stroke-width="0.14" textLength="24.10" lengthAdjust="spacingAndGlyphs">計算済み</text></svg>
<svg class="a" style="left:69.40px;top:310.00px" width="23.4" height="16"><text x="0" y="12" font-family="Liberation Sans, sans-serif" font-size="6.8" fill="#c4c7c5" stroke="#c4c7c5" stroke-width="0.14" textLength="23.40" lengthAdjust="spacingAndGlyphs">レイアウト</text></svg>
<svg class="a" style="left:102.40px;top:310.00px" width="40.2" height="16"><text x="0" y="12" font-family="Liberation Sans, sans-serif" font-size="6.8" fill="#c4c7c5" stroke="#c4c7c5" stroke-width="0.14" textLength="40.20" lengthAdjust="spacingAndGlyphs">イベント リスナー</text></svg>
<svg class="a" style="left:152.90px;top:310.00px" width="53.7" height="16"><text x="0" y="12" font-family="Liberation Sans, sans-serif" font-size="6.8" fill="#c4c7c5" stroke="#c4c7c5" stroke-width="0.14" textLength="53.70" lengthAdjust="spacingAndGlyphs">DOM ブレークポイント</text></svg>
<svg class="a" style="left:216.90px;top:310.00px" width="23.5" height="16"><text x="0" y="12" font-family="Liberation Sans, sans-serif" font-size="6.8" fill="#c4c7c5" stroke="#c4c7c5" stroke-width="0.14" textLength="23.50" lengthAdjust="spacingAndGlyphs">プロパティ</text></svg>
<svg class="a" style="left:250.70px;top:310.00px" width="37.6" height="16"><text x="0" y="12" font-family="Liberation Sans, sans-serif" font-size="6.8" fill="#c4c7c5" stroke="#c4c7c5" stroke-width="0.14" textLength="37.60" lengthAdjust="spacingAndGlyphs">アクセシビリティ</text></svg>
<div class="a" style="left:0.00px;top:325.60px;width:358px;height:0.6px;background:#474747"></div>
<div class="a" style="left:1.90px;top:328.30px;width:257.5px;height:9.9px;box-shadow:inset 0 0 0 0.7px #646464;border-radius:1.6px"></div>
<svg class="a" style="left:3.90px;top:324.00px" width="17.8" height="16"><text x="0" y="12" font-family="Liberation Sans, sans-serif" font-size="6.6" fill="#8e918f" stroke="#8e918f" stroke-width="0.10" textLength="17.80" lengthAdjust="spacingAndGlyphs">フィルタ</text></svg>
<svg class="a" style="left:263.90px;top:324.00px" width="14.5" height="16"><text x="0" y="12" font-family="Liberation Mono, monospace" font-size="7" fill="#5db0d7" font-weight="bold" textLength="14.48" lengthAdjust="spacingAndGlyphs"><tspan fill="#d6d6d6">:hov</tspan></text></svg>
<svg class="a" style="left:284.60px;top:324.00px" width="14.5" height="16"><text x="0" y="12" font-family="Liberation Mono, monospace" font-size="7" fill="#5db0d7" font-weight="bold" textLength="14.48" lengthAdjust="spacingAndGlyphs"><tspan fill="#d6d6d6">.cls</tspan></text></svg>
<svg class="a" style="left:305.80px;top:330.20px" width="8" height="7" viewBox="0 0 8 7" fill="none" stroke="#d0d0d0" stroke-width="0.8"><path d="M3 0v6M0 3h6"/><path d="M7.6 4.6v2.2H5.4z" fill="#d0d0d0" stroke="none"/></svg>
<svg class="a" style="left:321.00px;top:329.40px" width="7.8" height="8.4" viewBox="0 0 7.8 8.4" fill="none" stroke="#d0d0d0" stroke-width="0.8"><rect x="0.6" y="0.5" width="6.6" height="3.2" rx="0.4"/><path d="M0.6 2.1h6.6M3.9 3.7v1.5M2.9 5.2h2v2.8h-2z"/></svg>
<svg class="a" style="left:335.20px;top:329.60px" width="7.8" height="7.8" viewBox="0 0 7.8 7.8" fill="none" stroke="#d0d0d0" stroke-width="0.8"><rect x="0.5" y="0.5" width="6.8" height="6.8" rx="0.8"/><path d="M4.9 0.5v6.8"/><path d="M3.7 2.6L2.2 3.9L3.7 5.2z" fill="#d0d0d0" stroke="none"/></svg>
<div class="a" style="left:0.00px;top:340.30px;width:349.3px;height:0.6px;background:#474747"></div>
<svg class="a" style="left:10.80px;top:335.00px" width="54.4" height="16"><text x="0" y="12" font-family="Liberation Mono, monospace" font-size="6.2" fill="#5db0d7" textLength="54.40" lengthAdjust="spacingAndGlyphs"><tspan fill="#44739a">min-height</tspan><tspan fill="#8a8a8a">: 100%;</tspan></text></svg>
<svg class="a" style="left:10.80px;top:343.00px" width="54.4" height="16"><text x="0" y="12" font-family="Liberation Mono, monospace" font-size="6.2" fill="#5db0d7" textLength="54.40" lengthAdjust="spacingAndGlyphs"><tspan fill="#6cb9ea">color</tspan><tspan fill="#d6d6d6">:   #0a1325;</tspan></text></svg>
<div class="a" style="left:34.16px;top:350.90px;width:3.7px;height:3.7px;background:#0a1325;box-shadow:0 0 0 0.45px #9a9a9a"></div>
<svg class="a" style="left:10.80px;top:350.00px" width="89.6" height="16"><text x="0" y="12" font-family="Liberation Mono, monospace" font-size="6.2" fill="#5db0d7" textLength="89.60" lengthAdjust="spacingAndGlyphs"><tspan fill="#44739a">background-color</tspan><tspan fill="#8a8a8a">:   #f8f8f8;</tspan></text></svg>
<div class="a" style="left:69.36px;top:358.30px;width:3.7px;height:3.7px;background:#b9b9b9;box-shadow:0 0 0 0.45px #9a9a9a"></div>
<svg class="a" style="left:10.80px;top:358.00px" width="118.4" height="16"><text x="0" y="12" font-family="Liberation Mono, monospace" font-size="6.2" fill="#5db0d7" textLength="118.40" lengthAdjust="spacingAndGlyphs"><tspan fill="#6cb9ea">font-family</tspan><tspan fill="#d6d6d6">: &quot;Open Sans&quot;, sans-serif;</tspan></text></svg>
<svg class="a" style="left:10.80px;top:365.00px" width="51.2" height="16"><text x="0" y="12" font-family="Liberation Mono, monospace" font-size="6.2" fill="#5db0d7" textLength="51.20" lengthAdjust="spacingAndGlyphs"><tspan fill="#6cb9ea">font-size</tspan><tspan fill="#d6d6d6">: 14px;</tspan></text></svg>
<svg class="a" style="left:10.80px;top:373.00px" width="64.0" height="16"><text x="0" y="12" font-family="Liberation Mono, monospace" font-size="6.2" fill="#5db0d7" textLength="64.00" lengthAdjust="spacingAndGlyphs"><tspan fill="#6cb9ea">font-weight</tspan><tspan fill="#d6d6d6">: normal;</tspan></text></svg>
<svg class="a" style="left:10.80px;top:381.00px" width="80.0" height="16"><text x="0" y="12" font-family="Liberation Mono, monospace" font-size="6.2" fill="#5db0d7" textLength="80.00" lengthAdjust="spacingAndGlyphs"><tspan fill="#6cb9ea">line-height</tspan><tspan fill="#d6d6d6">: 1.428571429;</tspan></text></svg>
<svg class="a" style="left:1.40px;top:388.00px" width="3.2" height="16"><text x="0" y="12" font-family="Liberation Mono, monospace" font-size="6.2" fill="#5db0d7" textLength="3.20" lengthAdjust="spacingAndGlyphs"><tspan fill="#d6d6d6">}</tspan></text></svg>
<div class="a" style="left:0.00px;top:403.30px;width:349.3px;height:0.6px;background:#474747"></div>
<svg class="a" style="left:1.40px;top:398.00px" width="19.2" height="16"><text x="0" y="12" font-family="Liberation Mono, monospace" font-size="6.2" fill="#5db0d7" textLength="19.20" lengthAdjust="spacingAndGlyphs"><tspan fill="#d6d6d6">body {</tspan></text></svg>
<svg class="a" style="left:283.30px;top:398.00px" width="64.0" height="16"><text x="0" y="12" font-family="Liberation Mono, monospace" font-size="6.2" fill="#5db0d7" textLength="64.00" lengthAdjust="spacingAndGlyphs"><tspan fill="#c0c0c0">_bootstrap.scss:1087</tspan></text></svg>
<div class="a" style="left:283.30px;top:410.80px;width:64.0px;height:0.5px;background:#b0b0b0"></div>
<svg class="a" style="left:10.80px;top:406.00px" width="192.0" height="16"><text x="0" y="12" font-family="Liberation Mono, monospace" font-size="6.2" fill="#5db0d7" textLength="192.00" lengthAdjust="spacingAndGlyphs"><tspan fill="#63a9d3">font-family</tspan><tspan fill="#c8c8c8">: &quot;Helvetica Neue&quot;, Helvetica, Arial, sans-serif;</tspan></text></svg>
<div class="a" style="left:10.80px;top:416.40px;width:192.0px;height:0.5px;background:#b8b8b8"></div>
<svg class="a" style="left:10.80px;top:414.00px" width="51.2" height="16"><text x="0" y="12" font-family="Liberation Mono, monospace" font-size="6.2" fill="#5db0d7" textLength="51.20" lengthAdjust="spacingAndGlyphs"><tspan fill="#63a9d3">font-size</tspan><tspan fill="#c8c8c8">: 14px;</tspan></text></svg>
<div class="a" style="left:10.80px;top:423.90px;width:51.2px;height:0.5px;background:#b8b8b8"></div>
<svg class="a" style="left:10.80px;top:422.00px" width="76.8" height="16"><text x="0" y="12" font-family="Liberation Mono, monospace" font-size="6.2" fill="#5db0d7" textLength="76.80" lengthAdjust="spacingAndGlyphs"><tspan fill="#63a9d3">line-height</tspan><tspan fill="#c8c8c8">: 1.42857143;</tspan></text></svg>
<div class="a" style="left:10.80px;top:431.60px;width:76.8px;height:0.5px;background:#b8b8b8"></div>
<div class="a sb" style="left:349.30px;top:326.20px;width:8.7px;height:108.6px"></div>
<div class="a th" style="left:350.30px;top:362.00px;width:6.6px;height:16.5px"></div>
<svg class="a" style="left:351.50px;top:329.80px" width="4" height="2.6" viewBox="0 0 4.6 3" ><path d="M0 3L2.3 0L4.6 3z" fill="#dadada"/></svg>
<svg class="a" style="left:351.50px;top:429.40px" width="4" height="2.6" viewBox="0 0 4.6 3" ><path d="M0 0L2.3 3L4.6 0z" fill="#dadada"/></svg>
<div class="a" style="left:0.00px;top:434.80px;width:358px;height:15px;background:#3c3c3c;box-shadow:inset 0 0.6px 0 #565656"></div>
<svg class="a" style="left:6.60px;top:439.40px" width="3" height="7" viewBox="0 0 3 7" fill="#c4c7c5"><circle cx="1.5" cy="0.9" r="0.85"/><circle cx="1.5" cy="3.5" r="0.85"/><circle cx="1.5" cy="6.1" r="0.85"/></svg>
<svg class="a" style="left:19.80px;top:434.00px" width="22.1" height="16"><text x="0" y="12" font-family="Liberation Sans, sans-serif" font-size="6.8" fill="#c4c7c5" stroke="#c4c7c5" stroke-width="0.14" textLength="22.10" lengthAdjust="spacingAndGlyphs">コンソール</text></svg>
<svg class="a" style="left:53.20px;top:434.00px" width="18.9" height="16"><text x="0" y="12" font-family="Liberation Sans, sans-serif" font-size="6.8" fill="#a8c7fa" stroke="#a8c7fa" stroke-width="0.14" textLength="18.90" lengthAdjust="spacingAndGlyphs">新機能</text></svg>
<svg class="a" style="left:76.60px;top:441.00px" width="4.8" height="4.8" viewBox="0 0 4.8 4.8" stroke="#c4c7c5" stroke-width="0.7"><path d="M0.4 0.4L4.4 4.4M4.4 0.4L0.4 4.4"/></svg>
<div class="a" style="left:48.10px;top:448.20px;width:35.7px;height:1.5px;background:#739fe6"></div>
<svg class="a" style="left:89.10px;top:434.00px" width="12.3" height="16"><text x="0" y="12" font-family="Liberation Sans, sans-serif" font-size="6.8" fill="#c4c7c5" stroke="#c4c7c5" stroke-width="0.14" textLength="12.30" lengthAdjust="spacingAndGlyphs">問題</text></svg>
<svg class="a" style="left:346.20px;top:440.20px" width="5.6" height="5.6" viewBox="0 0 5.6 5.6" stroke="#c4c7c5" stroke-width="0.85"><path d="M0.4 0.4L5.2 5.2M5.2 0.4L0.4 5.2"/></svg>
<svg class="a" style="left:7.70px;top:448.00px" width="112.9" height="16"><text x="0" y="12" font-family="Liberation Sans, sans-serif" font-size="6.6" fill="#e8eaed" textLength="112.90" lengthAdjust="spacing">Highlights from the Chrome 124 update</text></svg>
<div class="a" style="left:0.00px;top:463.80px;width:349.3px;height:0.6px;background:#4a4a4a"></div>
<svg class="a" style="left:9.60px;top:475.00px" width="109.0" height="16"><text x="0" y="12" font-family="Liberation Sans, sans-serif" font-size="7.7" fill="#8ab4f8" textLength="109.00" lengthAdjust="spacing">Scroll-driven animations support</text></svg>
<div class="a" style="left:201.70px;top:480.60px;width:139.2px;height:6px;background:#3578f5"></div>
<div class="a sb" style="left:349.30px;top:449.80px;width:8.7px;height:36.2px"></div>
<div class="a th" style="left:350.30px;top:459.00px;width:6.6px;height:9px"></div>
<svg class="a" style="left:351.50px;top:453.60px" width="4" height="2.6" viewBox="0 0 4.6 3" ><path d="M0 3L2.3 0L4.6 3z" fill="#dadada"/></svg>
<svg class="a" style="left:351.50px;top:481.40px" width="4" height="2.6" viewBox="0 0 4.6 3" ><path d="M0 0L2.3 3L4.6 0z" fill="#dadada"/></svg>
</div>
</body></html>
